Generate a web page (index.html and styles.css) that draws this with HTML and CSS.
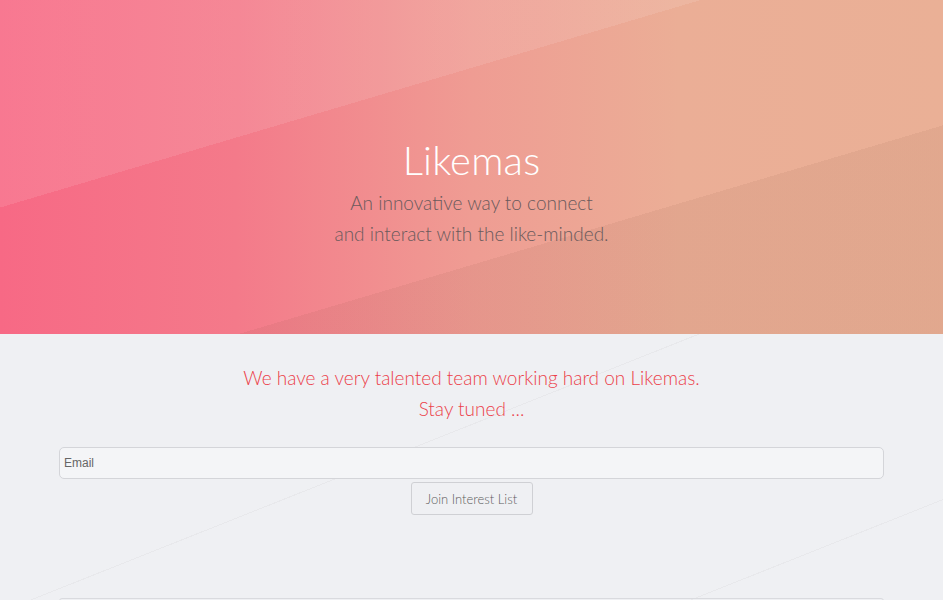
FILE: index.html
```html
<!DOCTYPE html>
<html lang="en">
<head>
<meta charset="utf-8">
<title>Likemas</title>
<link rel="stylesheet" href="styles.css">
</head>
<body>
<header class="hero">
  <h1 class="hero-title">Likemas</h1>
  <p class="hero-sub">An innovative way to connect<br>and interact with the like-minded.</p>
</header>
<main class="signup">
  <p class="tagline">We have a very talented team working hard on Likemas.<br>Stay tuned ...</p>
  <form class="form">
    <input class="email" type="text" placeholder="Email">
    <button class="join" type="button">Join Interest List</button>
  </form>
  <div class="panel"></div>
</main>
</body>
</html>
```
FILE: styles.css
```css
* { box-sizing: border-box; }
html, body { margin: 0; padding: 0; }
body {
  font-family: "Lato", "Liberation Sans", sans-serif;
  background: #eff0f3;
}
.hero {
  height: 334px;
  display: flex;
  flex-direction: column;
  align-items: center;
  padding-top: 136px;
  background:
    linear-gradient(163.5deg, rgba(255,255,255,0.1) 0, rgba(255,255,255,0.1) 199px, rgba(255,255,255,0) 199px, rgba(255,255,255,0) 388px, rgba(110,60,40,0.07) 388px),
    linear-gradient(to right, #f76985 0%, #f47a8a 25%, #ef9c93 50%, #ebae96 72%, #eab096 100%);
}
.hero-title {
  margin: 0;
  font-weight: 300;
  font-size: 40px;
  line-height: 48px;
  color: #ffffff;
  letter-spacing: 0.2px;
}
.hero-sub {
  margin: 3px 0 0;
  text-align: center;
  font-weight: 300;
  font-size: 19px;
  line-height: 31px;
  color: #6a5a5c;
}
.signup {
  min-height: 320px;
  padding: 28px 59px 0;
  display: flex;
  flex-direction: column;
  align-items: center;
  background:
    linear-gradient(158.3deg, transparent 258px, rgba(0,0,0,0.03) 258px, rgba(0,0,0,0.03) 259px, transparent 259px, transparent 502px, rgba(0,0,0,0.03) 502px, rgba(0,0,0,0.03) 503px, transparent 503px);
  background-size: 943px 300px;
  background-repeat: no-repeat;
}
.tagline {
  margin: 0;
  text-align: center;
  font-weight: 300;
  font-size: 19px;
  line-height: 31px;
  color: #ec3f4a;
}
.form {
  width: 100%;
  margin-top: 23px;
  display: flex;
  flex-direction: column;
  align-items: center;
}
.email {
  width: 100%;
  height: 32px;
  border: 1px solid #d4d5d9;
  border-radius: 5px;
  background: #f4f5f7;
  padding: 0 4px;
  font-family: "Liberation Sans", sans-serif;
  font-size: 12px;
  color: #555;
}
.email::placeholder { color: #666; }
.join {
  margin-top: 3px;
  width: 122px;
  height: 33px;
  border: 1px solid #cfd0d4;
  border-radius: 3px;
  background: #eff0f3;
  font-family: "Lato", sans-serif;
  font-weight: 300;
  font-size: 13px;
  color: #5e5e5e;
  padding: 0;
}
.panel {
  width: 100%;
  margin-top: 83px;
  height: 40px;
  border: 1px solid #d9dade;
  border-radius: 3px 3px 0 0;
}
```
